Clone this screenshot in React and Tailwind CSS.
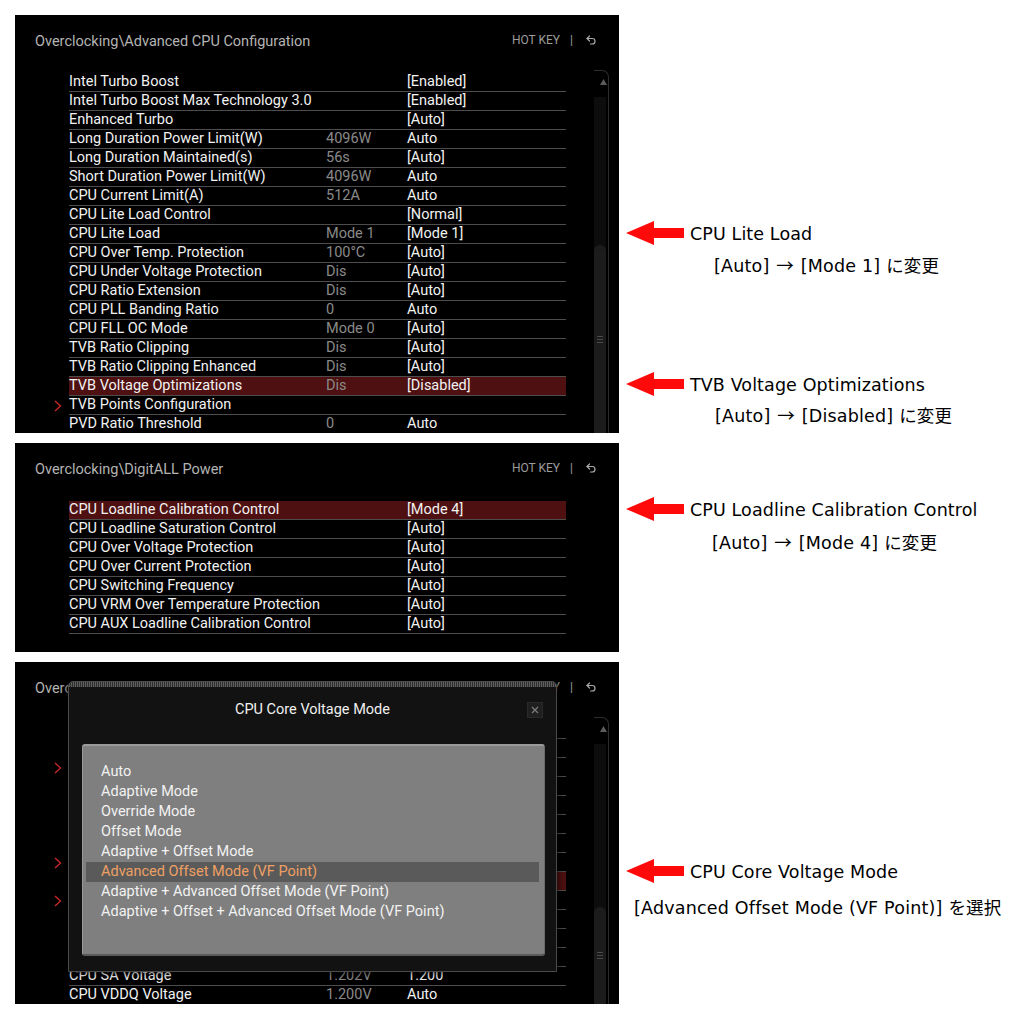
import { Undo2 } from 'lucide-react';

const bios = { fontFamily: 'Roboto, "Liberation Sans", sans-serif' };
const note = { fontFamily: '"DejaVu Sans", "Noto Sans CJK JP", sans-serif' };

const cpuRows = [
  ['Intel Turbo Boost', '', '[Enabled]'],
  ['Intel Turbo Boost Max Technology 3.0', '', '[Enabled]'],
  ['Enhanced Turbo', '', '[Auto]'],
  ['Long Duration Power Limit(W)', '4096W', 'Auto'],
  ['Long Duration Maintained(s)', '56s', '[Auto]'],
  ['Short Duration Power Limit(W)', '4096W', 'Auto'],
  ['CPU Current Limit(A)', '512A', 'Auto'],
  ['CPU Lite Load Control', '', '[Normal]'],
  ['CPU Lite Load', 'Mode 1', '[Mode 1]'],
  ['CPU Over Temp. Protection', '100°C', '[Auto]'],
  ['CPU Under Voltage Protection', 'Dis', '[Auto]'],
  ['CPU Ratio Extension', 'Dis', '[Auto]'],
  ['CPU PLL Banding Ratio', '0', 'Auto'],
  ['CPU FLL OC Mode', 'Mode 0', '[Auto]'],
  ['TVB Ratio Clipping', 'Dis', '[Auto]'],
  ['TVB Ratio Clipping Enhanced', 'Dis', '[Auto]'],
  ['TVB Voltage Optimizations', 'Dis', '[Disabled]', 'hl'],
  ['TVB Points Configuration', '', '', 'sub'],
  ['PVD Ratio Threshold', '0', 'Auto'],
];

const powerRows = [
  ['CPU Loadline Calibration Control', '', '[Mode 4]', 'hl'],
  ['CPU Loadline Saturation Control', '', '[Auto]'],
  ['CPU Over Voltage Protection', '', '[Auto]'],
  ['CPU Over Current Protection', '', '[Auto]'],
  ['CPU Switching Frequency', '', '[Auto]'],
  ['CPU VRM Over Temperature Protection', '', '[Auto]'],
  ['CPU AUX Loadline Calibration Control', '', '[Auto]'],
];

// rows 1-13 sit entirely behind the popup, only their lines / markers peek out
const voltRows = [
  ['', '', ''],
  ['', '', ''],
  ['', '', '', 'sub'],
  ['', '', ''],
  ['', '', ''],
  ['', '', ''],
  ['', '', ''],
  ['', '', '', 'sub'],
  ['', '', '', 'hl'],
  ['', '', '', 'sub'],
  ['', '', ''],
  ['', '', ''],
  ['', '', ''],
  ['CPU SA Voltage', '1.202V', '1.200'],
  ['CPU VDDQ Voltage', '1.200V', 'Auto'],
];

const modes = [
  'Auto',
  'Adaptive Mode',
  'Override Mode',
  'Offset Mode',
  'Adaptive + Offset Mode',
  'Advanced Offset Mode (VF Point)',
  'Adaptive + Advanced Offset Mode (VF Point)',
  'Adaptive + Offset + Advanced Offset Mode (VF Point)',
];

function Chevron() {
  return (
    <svg width="8" height="12" viewBox="0 0 8 12" className="absolute left-[-15px] top-[4px]">
      <polyline points="1,1 6.5,6 1,11" fill="none" stroke="#c8282a" strokeWidth="1.4" />
    </svg>
  );
}

function Row({ label, current, setting, kind }) {
  return (
    <div
      className={`relative h-[19px] flex items-center border-b border-[#4d4d4d] text-[14.5px] leading-[18px] ${
        kind === 'hl' ? 'bg-[#4e1010]' : ''
      }`}
    >
      {kind === 'sub' && <Chevron />}
      <div className="w-[257px] text-[#f2f2f2] whitespace-nowrap">{label}</div>
      <div className="w-[81px] text-[#8a8a8a] whitespace-nowrap">{current}</div>
      <div className="text-[#f2f2f2] whitespace-nowrap">{setting}</div>
    </div>
  );
}

function Header({ title }) {
  return (
    <div className="h-[55px] flex items-start justify-between pl-[20px] pr-[22px]">
      <div className="pt-[18px] text-[14.5px] leading-[18px] text-[#b4b4b4] whitespace-nowrap">{title}</div>
      <div className="pt-[18px] flex items-center gap-[10px] text-[12px] leading-[14px] text-[#9c9c9c]">
        <span>HOT KEY</span>
        <span>|</span>
        <Undo2 size={12} strokeWidth={2.4} className="ml-[2px] text-[#a8a8a8]" />
      </div>
    </div>
  );
}

function Scrollbar({ thumb }) {
  return (
    <div className="w-[15px] flex flex-col border-t border-r border-[#2c2c2c] rounded-tr-[7px]">
      <div className="h-[26px] flex justify-center pt-[8px] pl-[4px]">
        <svg width="7" height="6" viewBox="0 0 7 6">
          <polygon points="3.5,0 7,6 0,6" fill="#5c5c5c" />
        </svg>
      </div>
      <div className="flex-1 w-[12px] bg-[#0d0d0d] flex flex-col justify-end">
        <div className={`${thumb} bg-[#1c1c1c] rounded-t-[6px] flex flex-col items-center justify-center gap-[2px]`}>
          <div className="w-[6px] h-px bg-[#4a4a4a]" />
          <div className="w-[6px] h-px bg-[#4a4a4a]" />
          <div className="w-[6px] h-px bg-[#4a4a4a]" />
        </div>
      </div>
    </div>
  );
}

function RowList({ rows }) {
  return (
    <div className="w-[497px] pt-[3px]">
      {rows.map(([l, c, s, k], i) => (
        <Row key={i} label={l} current={c} setting={s} kind={k} />
      ))}
    </div>
  );
}

function VoltageModal() {
  return (
    <div className="absolute left-[53px] top-[19px] w-[489px] h-[291px] bg-[#121212] border border-[#4a4a4a] rounded-t-[5px] overflow-hidden shadow-[0_0_8px_rgba(0,0,0,0.8)]">
      <div className="h-[5px] bg-[repeating-linear-gradient(90deg,#5e5e5e_0px,#5e5e5e_1px,#2e2e2e_1px,#2e2e2e_2px)]" />
      <div className="relative h-[57px] flex justify-center pt-[14px]">
        <div className="text-[14.5px] leading-[18px] text-[#f0f0f0]">CPU Core Voltage Mode</div>
        <div className="absolute right-[13px] top-[15px] w-[16px] h-[16px] bg-[#1f1f1f] border border-[#2a2a2a] flex items-center justify-center">
          <svg width="8" height="8" viewBox="0 0 8 8">
            <path d="M1 1 7 7 M7 1 1 7" stroke="#7a7a7a" strokeWidth="1.3" />
          </svg>
        </div>
      </div>
      <div className="ml-[13px] mr-[11px] h-[212px] bg-[#7f7f7f] rounded-[3px] border-t-2 border-l border-[#9a9a9a] border-b-2 border-r border-b-[#5a5a5a] border-r-[#6a6a6a] pt-[16px] pl-[3px] pr-[5px]">
        {modes.map((m, i) => (
          <div
            key={i}
            className={`h-[20px] flex items-center pl-[15px] text-[14.5px] whitespace-nowrap ${
              i === 5 ? 'bg-[#5a5a5a] text-[#eea064]' : 'text-[#f2f2f2]'
            }`}
          >
            {m}
          </div>
        ))}
      </div>
    </div>
  );
}

function Arrow() {
  return (
    <svg width="58" height="24" viewBox="0 0 58 24" className="shrink-0">
      <polygon points="0,12 28,0 28,7 58,7 58,17 28,17 28,24" fill="#ff0a0a" />
    </svg>
  );
}

function Note({ mt, title, before, after, detailPad, gap }) {
  return (
    <div className={mt}>
      <div className="h-[24px] flex items-center">
        <Arrow />
        <div className="ml-[6px] pt-[2px] text-[17.5px] tracking-[0.1px] text-black whitespace-nowrap">{title}</div>
      </div>
      <div className={`${gap} ${detailPad} h-[24px] leading-[24px] text-[17.5px] tracking-[0.2px] text-black whitespace-nowrap`}>
        {before}
        {after}
      </div>
    </div>
  );
}

function Arr() {
  return <span className="font-['Noto_Sans_CJK_JP'] px-[1px]">→</span>;
}

export default function App() {
  return (
    <div className="w-[1024px] h-[1024px] bg-white flex overflow-hidden">
      <div className="w-[619px] pl-[15px] pt-[15px] flex flex-col gap-[10px] shrink-0" style={bios}>
        <div className="h-[418px] bg-black flex flex-col overflow-hidden">
          <Header title="Overclocking\Advanced CPU Configuration" />
          <div className="flex-1 flex pl-[54px] min-h-0">
            <RowList rows={cpuRows} />
            <div className="ml-[28px] flex">
              <Scrollbar thumb="h-[188px]" />
            </div>
          </div>
        </div>

        <div className="h-[209px] bg-black flex flex-col overflow-hidden">
          <Header title="Overclocking\DigitALL Power" />
          <div className="flex pl-[54px]">
            <RowList rows={powerRows} />
          </div>
        </div>

        <div className="relative h-[342px] bg-black flex flex-col overflow-hidden">
          <Header title="Overclocking\Voltage Setting" />
          <div className="flex-1 flex pl-[54px] min-h-0">
            <RowList rows={voltRows} />
            <div className="ml-[28px] flex">
              <Scrollbar thumb="h-[97px]" />
            </div>
          </div>
          <VoltageModal />
        </div>
      </div>

      <div className="ml-[7px] flex flex-col" style={note}>
        <Note
          mt="mt-[221px]"
          title="CPU Lite Load"
          before={<>[Auto] <Arr /> [Mode 1] </>}
          after="に変更"
          detailPad="pl-[88px]"
          gap="mt-[8px]"
        />
        <Note
          mt="mt-[95px]"
          title="TVB Voltage Optimizations"
          before={<>[Auto] <Arr /> [Disabled] </>}
          after="に変更"
          detailPad="pl-[89px]"
          gap="mt-[7px]"
        />
        <Note
          mt="mt-[70px]"
          title="CPU Loadline Calibration Control"
          before={<>[Auto] <Arr /> [Mode 4] </>}
          after="に変更"
          detailPad="pl-[86px]"
          gap="mt-[9px]"
        />
        <Note
          mt="mt-[305px]"
          title="CPU Core Voltage Mode"
          before="[Advanced Offset Mode (VF Point)] "
          after="を選択"
          detailPad="pl-[8px]"
          gap="mt-[13px]"
        />
      </div>
    </div>
  );
}
